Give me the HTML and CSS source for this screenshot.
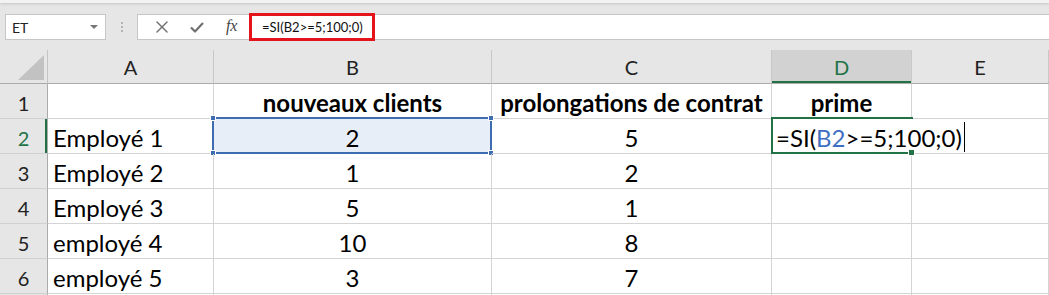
FILE: index.html
```html
<!DOCTYPE html>
<html>
<head>
  <link rel="stylesheet" href="styles.css">
</head>
<body>
  <div class="toolbar">
    <div class="ribbon-edge"></div>
    <div class="formula-row">
      <div class="name-box">
        <span class="name-text">ET</span>
        <span class="caret"></span>
      </div>
      <div class="grip">
        <span></span><span></span><span></span>
      </div>
      <div class="formula-bar">
        <div class="fb-buttons">
          <span class="fb-btn">
            <svg width="12" height="12" viewBox="0 0 12 12" fill="none" stroke="#707070" stroke-width="1.4" stroke-linecap="round">
              <line x1="1" y1="1" x2="11" y2="11" />
              <line x1="11" y1="1" x2="1" y2="11" />
            </svg>
          </span>
          <span class="fb-btn">
            <svg width="14" height="11" viewBox="0 0 14 11" fill="none" stroke="#707070" stroke-width="2.2" stroke-linejoin="round">
              <polyline points="1,5.5 5,9.5 13,1" />
            </svg>
          </span>
          <span class="fb-btn fx">fx</span>
        </div>
        <div class="fb-input">
          <span class="fb-text">=SI(B2&gt;=5;100;0)</span>
        </div>
      </div>
    </div>
  </div>

  <div class="sheet">
    <div class="hd corner">
      <svg width="48" height="34" viewBox="0 0 48 34">
        <polygon points="44,5 44,30 18,30" fill="#c2c2c2" />
      </svg>
    </div>
    <div class="hd col">A</div>
    <div class="hd col">B</div>
    <div class="hd col">C</div>
    <div class="hd col active-col">D</div>
    <div class="hd col">E</div>

    <div class="hd row">1</div>
    <div class="cell"></div>
    <div class="cell num bold">nouveaux clients</div>
    <div class="cell num bold">prolongations de contrat</div>
    <div class="cell num bold">prime</div>
    <div class="cell"></div>

    <div class="hd row active-row">2</div>
    <div class="cell">Employé 1</div>
    <div class="cell num selected">
      2
      <div class="sel-frame">
        <span class="handle tl"></span><span class="handle tr"></span>
        <span class="handle bl"></span><span class="handle br"></span>
      </div>
    </div>
    <div class="cell num">5</div>
    <div class="cell editing">
      <span class="edit-text">=SI(<span class="ref">B2</span>&gt;=5;100;0)</span><span class="cursor"></span>
      <span class="fill-handle"></span>
    </div>
    <div class="cell"></div>

    <div class="hd row">3</div>
    <div class="cell">Employé 2</div>
    <div class="cell num">1</div>
    <div class="cell num">2</div>
    <div class="cell"></div>
    <div class="cell"></div>

    <div class="hd row">4</div>
    <div class="cell">Employé 3</div>
    <div class="cell num">5</div>
    <div class="cell num">1</div>
    <div class="cell"></div>
    <div class="cell"></div>

    <div class="hd row">5</div>
    <div class="cell">employé 4</div>
    <div class="cell num">10</div>
    <div class="cell num">8</div>
    <div class="cell"></div>
    <div class="cell"></div>

    <div class="hd row">6</div>
    <div class="cell">employé 5</div>
    <div class="cell num">3</div>
    <div class="cell num">7</div>
    <div class="cell"></div>
    <div class="cell"></div>

    <div class="hd stub"></div>
    <div class="stub-cell"></div>
    <div class="stub-cell"></div>
    <div class="stub-cell"></div>
    <div class="stub-cell"></div>
    <div class="stub-cell"></div>
  </div>
</body>
</html>
```

FILE: styles.css
```css
body {
  margin: 0;
  width: 1049px;
  height: 295px;
  overflow: hidden;
  background: #e6e6e6;
  font-family: Lato, 'Noto Sans', sans-serif;
  color: #000;
}

/* formula bar area */

.toolbar {
  height: 50px;
  background: #e6e6e6;
}

.ribbon-edge {
  height: 3px;
  background: #f3f3f3;
  box-shadow: 0 1px 3px rgba(0,0,0,0.15);
}

.formula-row {
  display: flex;
  margin-top: 11px;
  height: 26px;
}

.name-box {
  width: 101px;
  margin-left: 5px;
  box-sizing: border-box;
  background: #fff;
  border: 1px solid #c6c6c6;
  display: flex;
  align-items: center;
  justify-content: space-between;
  padding: 0 6px 0 6px;
}

.name-text {
  font-size: 14px;
  color: #222;
}

.caret {
  width: 0;
  height: 0;
  border-left: 4px solid transparent;
  border-right: 4px solid transparent;
  border-top: 4px solid #777;
  margin-right: 1px;
}

.grip {
  width: 31px;
  display: flex;
  flex-direction: column;
  align-items: center;
  justify-content: center;
  gap: 2px;
}

.grip span {
  width: 2px;
  height: 2px;
  background: #b4b4b4;
}

.formula-bar {
  flex: 1;
  display: flex;
  background: #fff;
  border: 1px solid #c6c6c6;
  border-right: none;
  box-sizing: border-box;
}

.fb-buttons {
  width: 111px;
  display: flex;
  align-items: center;
  padding-left: 7px;
  box-sizing: border-box;
}

.fb-btn {
  width: 36px;
  display: flex;
  justify-content: center;
  align-items: center;
}

.fx {
  font-family: 'Liberation Serif', serif;
  font-style: italic;
  font-size: 16px;
  color: #444;
  padding-bottom: 2px;
}

.fb-input {
  flex: 1;
  display: flex;
  align-items: center;
}

.fb-text {
  height: 28px;
  margin: -2px 0;
  box-sizing: border-box;
  border: 3px solid #e3141c;
  padding: 0 9px 0 10px;
  display: flex;
  align-items: center;
  font-size: 13px;
  color: #111;
}

/* grid */

.sheet {
  display: grid;
  grid-template-columns: 48px 166px 278px 280px 140px 1fr;
  grid-template-rows: 34px repeat(6, 35px) 1px;
  background: #fff;
}

.hd {
  background: #e6e6e6;
  box-sizing: border-box;
  color: #222;
  font-size: 20px;
  text-align: center;
}

.corner {
  border-right: 1px solid #c4c4c4;
  border-bottom: 1px solid #ababab;
  line-height: 0;
}

.corner svg {
  display: block;
}

.col {
  border-right: 1px solid #c8c8c8;
  border-bottom: 1px solid #ababab;
  padding-top: 3px;
  line-height: 29px;
}

.active-col {
  background: #d2d2d2;
  color: #217346;
  box-shadow: inset 0 -2px 0 #217346;
}

.row {
  border-right: 1px solid #ababab;
  border-bottom: 1px solid #d0d0d0;
  padding-top: 4px;
  line-height: 30px;
}

.active-row {
  color: #217346;
  box-shadow: inset -2px 0 0 #217346;
}

.stub {
  border-right: 1px solid #ababab;
}

.stub-cell {
  border-right: 1px solid #d4d4d4;
}

.cell {
  position: relative;
  box-sizing: border-box;
  border-right: 1px solid #d4d4d4;
  border-bottom: 1px solid #d4d4d4;
  font-size: 24px;
  padding: 3px 5px 0;
  line-height: 31px;
  white-space: nowrap;
}

.num {
  text-align: center;
}

.bold {
  font-weight: 700;
}

.selected {
  background: #e8eef8;
}

.sel-frame {
  position: absolute;
  left: -2px;
  top: -2px;
  right: -1px;
  bottom: -1px;
  border: 2px solid #3d6cb0;
}

.handle {
  position: absolute;
  width: 6px;
  height: 6px;
  background: #3d6cb0;
  border: 1px solid #fff;
  box-sizing: border-box;
}

.handle.tl { left: -4px; top: -4px; }
.handle.tr { right: -4px; top: -4px; }
.handle.bl { left: -4px; bottom: -4px; }
.handle.br { right: -4px; bottom: -4px; }

.editing {
  overflow: visible;
  z-index: 1;
  border-top: 2px solid #217346;
  border-left: 2px solid #217346;
  border-bottom: 2px solid #217346;
  border-right: none;
  margin-top: -2px;
  margin-left: -1px;
  margin-right: -1px;
  padding: 3px 0 0 3px;
  display: flex;
  align-items: flex-start;
}

.edit-text {
  flex-shrink: 0;
}

.ref {
  color: #3f6fc2;
}

.cursor {
  flex-shrink: 0;
  width: 1px;
  height: 30px;
  background: #000;
  margin-left: 2px;
}

.fill-handle {
  position: absolute;
  right: -2px;
  bottom: -4px;
  width: 5px;
  height: 5px;
  background: #217346;
  border: 1px solid #fff;
}
```
